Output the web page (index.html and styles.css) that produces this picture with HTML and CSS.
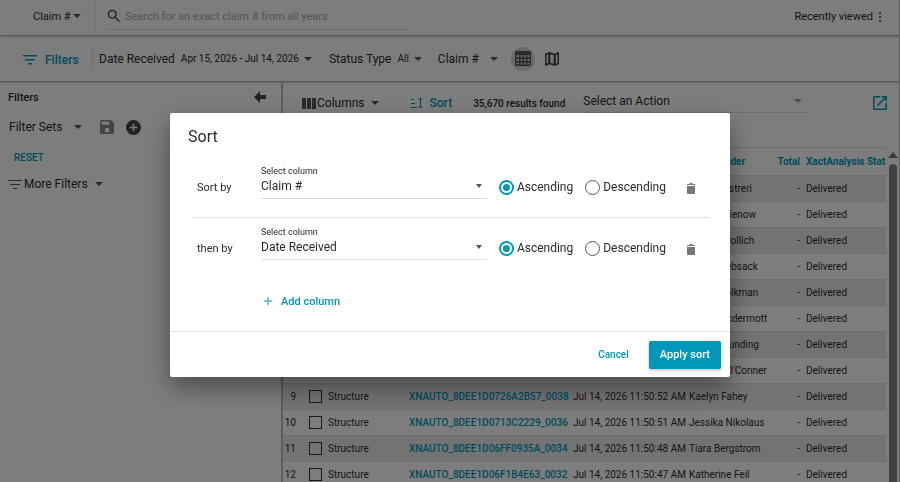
FILE: index.html
```html
<!DOCTYPE html>
<html lang="en">
<head>
  <meta charset="UTF-8" />
  <meta name="viewport" content="width=device-width, initial-scale=1" />
  <title>Claims Search</title>
  <link rel="stylesheet" href="styles.css">
</head>
<body>
  <div class="app">
    <header class="topbar">
      <div class="picker scope">
        <select aria-label="Search by"><option>Claim #</option></select>
      </div>
      <div class="search">
        <svg width="14" height="14" viewBox="2 2 20 20"><path fill="#444" d="M15.5 14h-.79l-.28-.27A6.47 6.47 0 0 0 16 9.5 6.5 6.5 0 1 0 9.5 16c1.61 0 3.09-.59 4.23-1.57l.27.28v.79l5 4.99L20.49 19l-4.99-5zm-6 0C7.01 14 5 11.99 5 9.5S7.01 5 9.5 5 14 7.01 14 9.5 11.99 14 9.5 14z"/></svg>
        <input type="text" aria-label="Search" placeholder="Search for an exact claim # from all years" />
      </div>
      <button class="recent">Recently viewed
        <svg width="4" height="12" viewBox="0 0 4 12" fill="#333"><circle cx="2" cy="2" r="1"/><circle cx="2" cy="6" r="1"/><circle cx="2" cy="10" r="1"/></svg>
      </button>
    </header>

    <nav class="filterbar">
      <button class="link filters-btn">
        <svg width="14" height="10" viewBox="0 0 14 10" fill="currentColor"><path d="M0 0h14v1.500H0zM2 4h10v1.500H2zM5 8h4v1.500H5z"/></svg>
        Filters
      </button>
      <button class="menu date-menu">Date Received <small>Apr 15, 2026 - Jul 14, 2026</small></button>
      <button class="menu status-menu">Status Type <small>All</small></button>
      <div class="picker claim-menu">
        <select aria-label="Claim field"><option>Claim #</option></select>
      </div>
      <button class="view active" aria-label="Table view">
        <svg width="16" height="15" viewBox="0 0 16 15"><path fill="#555" fill-rule="evenodd" d="M1.500 0h13Q16 0 16 1.500v12q0 1.500-1.500 1.500h-13Q0 15 0 13.500v-12Q0 0 1.500 0zM1.500 4v2.500H4V4zm4 0v2.500h2V4zM9 4v2.500h2V4zm3.500 0v2.500h2V4zm-11 4v2H4V8zm4 0v2h2V8zM9 8v2h2V8zm3.500 0v2h2V8zm-11 3.500v2H4v-2zm4 0v2h2v-2zm3.500 0v2h2v-2zm3.500 0v2h2v-2z"/></svg>
      </button>
      <button class="view" aria-label="Map view">
        <svg width="14" height="14" viewBox="3 3 18 18"><path fill="#444" fill-rule="evenodd" d="M20.500 3l-.16.03L15 5.100 9 3 3.360 4.900c-.21.07-.36.25-.36.480V20.500c0 .280.220.500.500.500l.160-.030L9 18.900l6 2.100 5.640-1.900c.210-.070.360-.250.360-.480V3.500c0-.280-.220-.500-.500-.500zM14 18.200l-4-1.400V5.800l4 1.400zM5 6.500l2-.7v11.400l-2 .7zm14 11l-2 .7V6.800l2-.7z"/></svg>
      </button>
    </nav>

    <main class="content">
      <aside class="sidebar">
        <div class="side-head">
          <h2>Filters</h2>
          <button aria-label="Collapse filters">
            <svg width="12" height="12" viewBox="0 0 12 12"><path fill="#444" d="M6 0v4h6v4H6v4L0 6z"/></svg>
          </button>
        </div>
        <div class="side-sets">
          <button class="menu wide">Filter Sets</button>
          <button aria-label="Save filter set">
            <svg width="14" height="14" viewBox="3 3 18 18"><path fill="#888" d="M17 3H5a2 2 0 0 0-2 2v14a2 2 0 0 0 2 2h14a2 2 0 0 0 2-2V7l-4-4zm-5 16a3 3 0 1 1 0-6 3 3 0 0 1 0 6zm3-10H5V5h10v4z"/></svg>
          </button>
          <button aria-label="Add filter set">
            <svg width="15" height="15" viewBox="2 2 20 20"><path fill="#444" d="M12 2a10 10 0 1 0 0 20 10 10 0 0 0 0-20zm5 11h-4v4h-2v-4H7v-2h4V7h2v4h4v2z"/></svg>
          </button>
        </div>
        <button class="link reset">RESET</button>
        <button class="menu more">
          <svg width="14" height="9" viewBox="0 0 14 9" fill="#555"><path d="M0 0h14v1H0zM2 4h10v1H2zM5 8h4v1H5z"/></svg>
          More Filters
        </button>
      </aside>

      <section class="results">
        <div class="toolbar">
          <button class="menu columns-btn">
            <svg width="14" height="11" viewBox="0 0 14 11" fill="#555"><path d="M0 0h4v11H0zM5 0h4v11H5zM10 0h4v11h-4z"/></svg>
            Columns
          </button>
          <button class="link sort-btn">
            <svg width="12" height="12" viewBox="0 0 12 12" fill="none" stroke="currentColor"><path d="M0 2.500h3M0 6.500h4M0 10.500h6M9.500 1v10M7.500 3l2-2 2 2M7.500 9l2 2 2-2"/></svg>
            Sort
          </button>
          <span class="count">35,670 results found</span>
          <div class="picker action">
            <select aria-label="Action"><option>Select an Action</option></select>
          </div>
          <button class="link export" aria-label="Open in new window">
            <svg width="14" height="14" viewBox="3 3 18 18"><path fill="currentColor" d="M19 19H5V5h7V3H5a2 2 0 0 0-2 2v14a2 2 0 0 0 2 2h14a2 2 0 0 0 2-2v-7h-2v7zM14 3v2h3.590l-9.830 9.830 1.410 1.410L19 6.410V10h2V3h-7z"/></svg>
          </button>
        </div>

        <div class="grid">
          <table>
            <thead>
              <tr>
                <th class="num"></th>
                <th class="check"></th>
                <th class="type">Type</th>
                <th class="claim">Claim #</th>
                <th class="date">Date Received</th>
                <th>Policyholder</th>
                <th class="total">Total</th>
                <th class="status">XactAnalysis Status</th>
              </tr>
            </thead>
            <tbody id="rows"></tbody>
          </table>
          <div class="scrollbar"><span class="up"></span><span class="thumb"></span></div>
        </div>
      </section>
    </main>
  </div>

  <div class="backdrop">
    <form class="dialog" role="dialog" aria-labelledby="sortTitle">
      <h1 id="sortTitle">Sort</h1>
      <div class="sort-row">
        <span class="order">Sort by</span>
        <div class="field">
          <label for="col1">Select column</label>
          <div class="picker">
            <select id="col1"><option>Claim #</option></select>
          </div>
        </div>
        <label class="radio"><input type="radio" name="dir1" checked />Ascending</label>
        <label class="radio"><input type="radio" name="dir1" />Descending</label>
        <button type="button" class="trash" aria-label="Remove">
          <svg width="8" height="11" viewBox="0 0 8 11" fill="#777"><path d="M0 1h2l1-1h2l1 1h2v1H0zM0 3h8v7q0 1-1 1H1q-1 0-1-1z"/></svg>
        </button>
      </div>
      <div class="sort-row">
        <span class="order">then by</span>
        <div class="field">
          <label for="col2">Select column</label>
          <div class="picker">
            <select id="col2"><option>Date Received</option></select>
          </div>
        </div>
        <label class="radio"><input type="radio" name="dir2" checked />Ascending</label>
        <label class="radio"><input type="radio" name="dir2" />Descending</label>
        <button type="button" class="trash" aria-label="Remove">
          <svg width="8" height="11" viewBox="0 0 8 11" fill="#777"><path d="M0 1h2l1-1h2l1 1h2v1H0zM0 3h8v7q0 1-1 1H1q-1 0-1-1z"/></svg>
        </button>
      </div>
      <button type="button" class="link add">
        <svg width="8" height="8" viewBox="0 0 8 8" stroke="currentColor"><path d="M4 0v8M0 4h8"/></svg>
        Add column
      </button>
      <footer>
        <button type="button" class="link cancel">Cancel</button>
        <button type="button" class="apply">Apply sort</button>
      </footer>
    </form>
  </div>

  <script src="script.js"></script>
</body>
</html>
```
FILE: styles.css
```css
* {
  box-sizing: border-box;
}

body {
  margin: 0;
  font-family: Roboto, sans-serif;
  font-size: 12px;
  color: #2a2a2a;
  background: #fafafa;
}

button,
select,
input {
  font: inherit;
  color: inherit;
  background: none;
  border: none;
  padding: 0;
  margin: 0;
}

button {
  display: inline-flex;
  align-items: center;
  white-space: nowrap;
  cursor: pointer;
}

svg {
  display: block;
  flex: none;
}

.link {
  color: #0097ba;
  font-weight: 500;
}

.app {
  height: 100vh;
  display: flex;
  flex-direction: column;
  overflow: hidden;
  border-right: 1px solid #bbb;
}

/* select with its own arrow */
.picker {
  display: flex;
  align-items: center;
}

.picker select {
  appearance: none;
  flex: 1;
  min-width: 0;
}

.picker::after,
.menu::after {
  content: "";
  flex: none;
  border: 4px solid transparent;
  border-top-color: #555;
  border-bottom: 0;
  margin-left: 5px;
}

.topbar {
  flex: none;
  display: flex;
  align-items: center;
  height: 36px;
  font-size: 11px;
  border-bottom: 1px solid #aaa;
  box-shadow: 0 1px 2px rgba(0, 0, 0, 0.2);
}

.scope {
  width: 95px;
  height: 35px;
  padding: 0 13px 3px 33px;
  border-right: 1px solid #ddd;
}

.scope::after {
  margin-left: 2px;
}

.search {
  display: flex;
  gap: 4px;
  align-items: center;
  width: 301px;
  height: 25px;
  margin-left: 12px;
  padding-bottom: 2px;
  border-bottom: 1px solid #ddd;
}

.search input {
  flex: 1;
  outline: none;
}

.search input::placeholder {
  color: #aaa;
}

.recent {
  gap: 5px;
  height: 20px;
  margin-left: auto;
  margin-right: 17px;
  padding-bottom: 2px;
}

.filterbar {
  flex: none;
  display: flex;
  align-items: center;
  height: 46px;
  border-bottom: 1px solid #aaa;
  box-shadow: 0 1px 2px rgba(0, 0, 0, 0.2);
}

.filterbar small {
  font-size: 10px;
  margin-left: 6px;
}

.filters-btn {
  gap: 8px;
  width: 93px;
  height: 23px;
  padding: 2px 0 0 23px;
  border-right: 1px solid #ddd;
}

.date-menu {
  margin-left: 6px;
}

.status-menu {
  margin-left: 17px;
}

.claim-menu {
  margin-left: 16px;
  margin-right: 13px;
}

.claim-menu::after {
  margin-left: 10px;
}

.view {
  justify-content: center;
  width: 24px;
  height: 24px;
  margin-right: 5px;
  border-radius: 50%;
}

.view.active {
  background: #d2d2d2;
}

.content {
  flex: 1;
  min-height: 0;
  display: flex;
}

.sidebar {
  flex: none;
  display: flex;
  flex-direction: column;
  align-items: flex-start;
  width: 283px;
  padding: 7px 15px 0 8px;
  border-right: 2px solid #bbb;
}

.side-head {
  align-self: stretch;
  display: flex;
  justify-content: space-between;
  align-items: center;
  height: 16px;
}

.side-head h2 {
  margin: 0;
  font-size: 11px;
  font-weight: 500;
}

.side-sets {
  display: flex;
  align-items: center;
  gap: 12px;
  height: 20px;
  margin-top: 12px;
  padding-left: 1px;
}

.side-sets .wide::after {
  margin-left: 12px;
}

.side-sets button:nth-child(2) {
  margin-left: 6px;
}

.reset {
  height: 16px;
  margin: 12px 0 0 6px;
  font-size: 10px;
}

.more {
  gap: 2px;
  height: 18px;
  margin-top: 10px;
}

.results {
  flex: 1;
  min-width: 0;
  display: flex;
  flex-direction: column;
}

.toolbar {
  display: flex;
  align-items: center;
  height: 42px;
  padding: 0 12px 0 19px;
}

.columns-btn {
  gap: 1px;
}

.sort-btn {
  gap: 7px;
  margin-left: 32px;
}

.count {
  margin-left: 21px;
  font-size: 10px;
  font-weight: 500;
  white-space: nowrap;
}

.action {
  flex: 1;
  max-width: 225px;
  height: 20px;
  margin-left: 18px;
  padding: 0 6px 4px 0;
  border-bottom: 1px solid #ddd;
}

.action::after {
  border-top-color: #999;
}

.export {
  margin-left: auto;
}

.grid {
  flex: 1;
  min-height: 0;
  display: flex;
  margin-top: 23px;
  overflow: hidden;
}

.grid table {
  flex: 1;
  width: 100%;
  min-width: 0;
  table-layout: fixed;
  border-collapse: collapse;
  align-self: flex-start;
  font-size: 10px;
}

th,
td {
  height: 26px;
  padding: 0;
  text-align: left;
  white-space: nowrap;
  overflow: hidden;
}

th {
  height: 28px;
  color: #0097ba;
  border-top: 1px solid #ddd;
}

td {
  border-top: 1px solid #ddd;
}

tbody tr:nth-child(odd) {
  background: #e6e6e6;
}

td a {
  color: #0097ba;
  font-weight: 500;
  text-decoration: none;
}

td input {
  appearance: none;
  display: block;
  width: 13px;
  height: 13px;
  border: 1px solid #333;
}

.num {
  width: 26px;
  padding-right: 13px;
  text-align: right;
  overflow: visible;
}

.check {
  width: 19px;
}

.type {
  width: 81px;
}

.claim {
  width: 164px;
}

.date {
  width: 116px;
}

.total {
  width: 32px;
  padding-right: 6px;
  text-align: right;
}

.status {
  width: 80px;
}

.scrollbar {
  flex: none;
  display: flex;
  flex-direction: column;
  align-items: center;
  gap: 6px;
  width: 13px;
  padding-top: 5px;
}

.up {
  border: 5px solid transparent;
  border-top: 0;
  border-bottom: 6px solid #777;
}

.thumb {
  flex: 1;
  width: 8px;
  border-radius: 4px 4px 0 0;
  background: #858585;
}

.backdrop {
  position: fixed;
  inset: 0;
  display: flex;
  align-items: center;
  justify-content: center;
  padding-top: 8px;
  background: rgba(0, 0, 0, 0.5);
}

.dialog {
  width: 100%;
  max-width: 560px;
  background: #fff;
  border-radius: 2px;
  box-shadow: 0 10px 24px rgba(0, 0, 0, 0.4);
}

.dialog h1 {
  margin: 0;
  padding: 14px 18px 10px;
  font-size: 16px;
  font-weight: 400;
  line-height: 20px;
}

.sort-row {
  display: flex;
  align-items: center;
  height: 61px;
  margin: 0 20px 0 21px;
  padding-left: 6px;
  border-bottom: 1px solid #e4e4e4;
}

.sort-row + .sort-row {
  border-color: transparent;
}

.order {
  width: 64px;
  font-size: 11px;
}

.field {
  flex: 1;
  padding-bottom: 10px;
}

.field label {
  display: block;
  font-size: 9px;
  line-height: 12px;
}

.field .picker {
  height: 22px;
  padding: 0 5px 3px 0;
  border-bottom: 1px solid #ddd;
}

.field .picker::after {
  border-width: 4px 3px 0;
}

.radio {
  display: flex;
  align-items: center;
  gap: 3px;
  margin-left: 12px;
}

.radio input {
  appearance: none;
  display: grid;
  place-items: center;
  width: 15px;
  height: 15px;
  border: 1px solid #555;
  border-radius: 50%;
}

.radio input:checked {
  border: 2px solid #0097ba;
}

.radio input:checked::before {
  content: "";
  width: 7px;
  height: 7px;
  border-radius: 50%;
  background: #0097ba;
}

.trash {
  margin: 2px 15px 0 21px;
}

.add {
  gap: 9px;
  height: 20px;
  margin: 12px 0 20px 94px;
  font-size: 11px;
}

.dialog footer {
  display: flex;
  align-items: center;
  justify-content: flex-end;
  gap: 20px;
  height: 46px;
  padding-right: 9px;
  font-size: 11px;
  border-top: 1px solid #e4e4e4;
}

.cancel {
  font-size: 10px;
}

.apply {
  height: 28px;
  padding: 0 11px;
  font-weight: 500;
  color: #fff;
  background: #0097ba;
  border-radius: 2px;
  box-shadow: 0 1px 3px rgba(0, 0, 0, 0.3);
}
```
FILE: script.js
```javascript
const claims = [
  { name: "Carlo Mastreri" },
  { name: "Arnold Wienow" },
  { name: "Rosalia Pollich" },
  { name: "Martin Lebsack" },
  { name: "Daniel Volkman" },
  { name: "Carrie Mcdermott" },
  { name: "Lewis Saunding" },
  { name: "Maybell O'Conner" },
  { name: "Kaelyn Fahey", claim: "XNAUTO_8DEE1D0726A2B57_0038", received: "Jul 14, 2026 11:50:52 AM" },
  { name: "Jessika Nikolaus", claim: "XNAUTO_8DEE1D0713C2229_0036", received: "Jul 14, 2026 11:50:51 AM" },
  { name: "Tiara Bergstrom", claim: "XNAUTO_8DEE1D06FF0935A_0034", received: "Jul 14, 2026 11:50:48 AM" },
  { name: "Katherine Feil", claim: "XNAUTO_8DEE1D06F1B4E63_0032", received: "Jul 14, 2026 11:50:47 AM" }
];

document.getElementById("rows").innerHTML = claims.map((row, i) => `
  <tr>
    <td class="num">${i + 1}</td>
    <td><input type="checkbox" aria-label="Select row ${i + 1}" /></td>
    <td>${row.claim ? "Structure" : ""}</td>
    <td><a href="#">${row.claim || ""}</a></td>
    <td>${row.received || ""}</td>
    <td>${row.name}</td>
    <td class="total">-</td>
    <td>Delivered</td>
  </tr>`).join("");
```
